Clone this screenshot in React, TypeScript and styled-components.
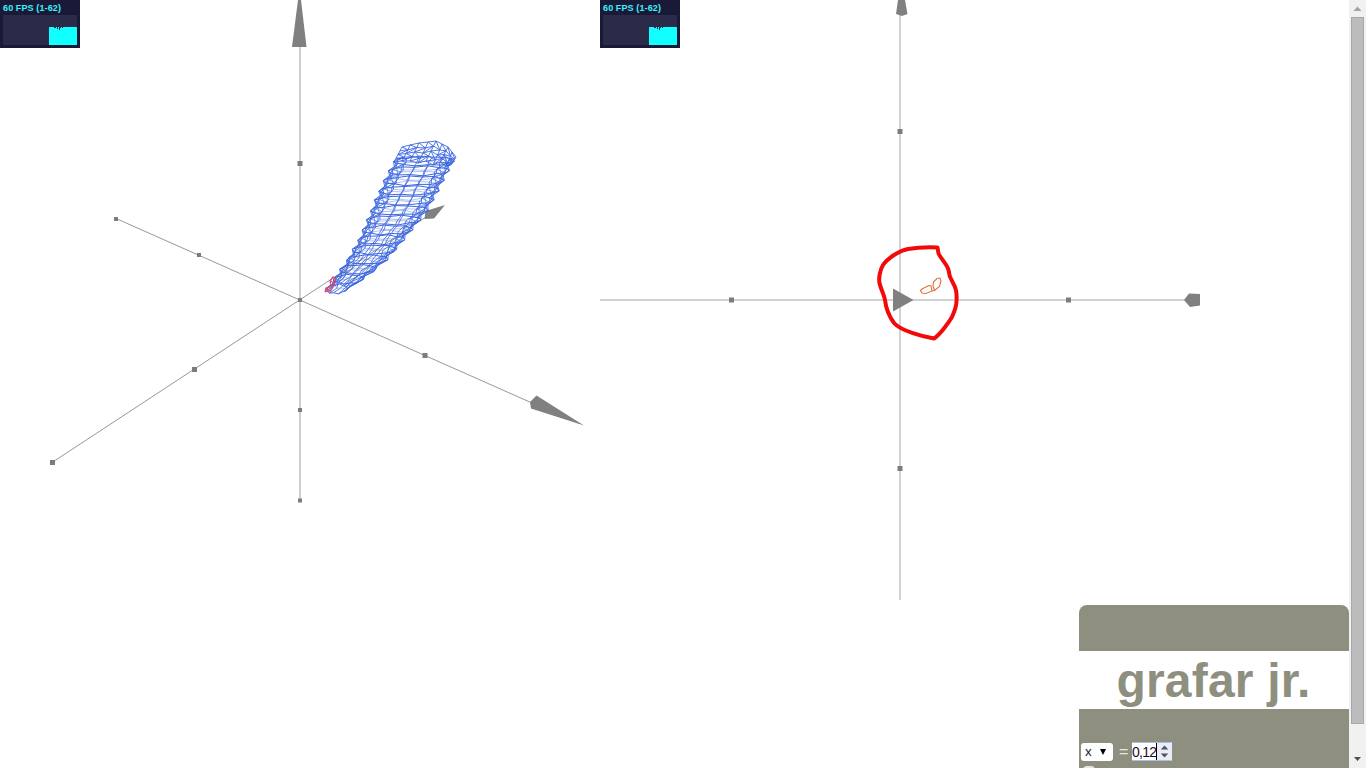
import React from 'react';
import styled, { createGlobalStyle } from 'styled-components';

const GlobalStyle = createGlobalStyle`
  * { box-sizing: border-box; }
  html, body { margin: 0; background: #fff; overflow: hidden; }
  body { font-family: "Liberation Sans", Arial, sans-serif; }
`;

const Page = styled.div`
  display: flex;
  width: 1366px;
  height: 768px;
  overflow: hidden;
`;
const Content = styled.main`
  flex: 1;
  display: flex;
  flex-direction: column;
  gap: 5px;
  min-width: 0;
`;
const Plots = styled.div`
  display: flex;
  flex: none;
  height: 600px;
`;
const PlotFrame = styled.section`
  position: relative;
  width: 600px;
  height: 600px;
`;
const Canvas = styled.svg`
  display: block;
  width: 600px;
  height: 600px;
`;
const Stats = styled.div`
  position: absolute;
  top: 0;
  left: 0;
  width: 80px;
  height: 48px;
  padding: 2px 3px 3px;
  background: #1a1a38;
`;
const StatsLabel = styled.div`
  height: 13px;
  font: bold 9px/12px "Liberation Sans", Arial, sans-serif;
  letter-spacing: 0.12px;
  color: #3df2fa;
  white-space: nowrap;
`;
const StatsGraph = styled.svg`
  display: block;
  width: 74px;
  height: 30px;
  background: #2a2a49;
`;

const Panel = styled.aside`
  flex: none;
  align-self: flex-end;
  width: 270px;
  height: 200px;
  border-radius: 8px 8px 0 0;
  background: #8f8f7f;
  padding-top: 46px;
`;
const Title = styled.h1`
  margin: 0;
  height: 58px;
  background: #fff;
  color: #8f8f7f;
  font-size: 48px;
  line-height: 60px;
  letter-spacing: 0.2px;
  text-indent: -1px;
  text-align: center;
  white-space: nowrap;
`;
const Controls = styled.div`
  display: flex;
  align-items: center;
  margin-top: 33px;
  padding-left: 2px;
  height: 19px;
  font-size: 13.33px;
`;
const Select = styled.div`
  display: flex;
  align-items: center;
  justify-content: space-between;
  width: 32px;
  height: 18px;
  padding: 0 7px 0 4px;
  border-radius: 3px;
  background: #fff;
  color: #222;
`;
const Equals = styled.span`
  width: 19px;
  padding-left: 6px;
  color: #e6e6e0;
  font-size: 16px;
  line-height: 18px;
`;
const NumberField = styled.div`
  display: flex;
  align-items: center;
  width: 40px;
  height: 19px;
  border: 1px solid #a9bde8;
  border-right-color: #e6eaf5;
  border-left: 0;
  background: #fff;
  color: #1a0d28;
`;
const Value = styled.span`
  width: 25px;
  height: 17px;
  line-height: 19px;
  font-size: 14px;
  letter-spacing: -0.75px;
  border-right: 1px solid #000;
  white-space: nowrap;
`;
const Spinner = styled.svg`
  flex: 1;
  height: 17px;
  background: #e9edfa;
`;
const NextRow = styled.div`
  width: 12px;
  height: 12px;
  margin: 5px 0 0 4px;
  border-radius: 4px;
  background: #e6e6e0;
`;

const Scrollbar = styled.div`
  flex: none;
  display: flex;
  flex-direction: column;
  align-items: center;
  width: 17px;
  background: #f1f1f1;
`;
const Track = styled.div`
  flex: 1;
`;
const ScrollButton = styled.svg`
  flex: none;
  width: 17px;
  height: 17px;
`;
const Thumb = styled.div`
  width: 13px;
  height: 707px;
  border: 1px solid #a8a8a8;
  background: #bcbcbc;
`;

type Point = [number, number];

// Silhouette of the surface, listed from its tip upwards.
const leftEdge: Point[] = [
  [325, 291], [332, 282], [339, 271], [348, 258], [358, 240], [366, 222],
  [374, 202], [383, 182], [392, 164], [402, 147],
];
const rightEdge: Point[] = [
  [331, 293], [345, 290], [358, 283], [371, 273], [385, 262], [397, 249],
  [409, 234], [420, 221], [431, 206], [440, 188], [448, 173], [456, 157],
];

const xAt = (edge: Point[], y: number): number => {
  for (let i = 0; i < edge.length - 1; i += 1) {
    const [x0, y0] = edge[i];
    const [x1, y1] = edge[i + 1];
    if (y <= y0 && y >= y1) return x0 + ((x1 - x0) * (y0 - y)) / (y0 - y1);
  }
  return y > edge[0][1] ? edge[0][0] : edge[edge.length - 1][0];
};

const RINGS = 27;
const SIDES = 14;

const ring = (k: number): Point[] => {
  const t = k / (RINGS - 1);
  const y = 289 - t * 128;
  const left = xAt(leftEdge, y);
  const right = xAt(rightEdge, y);
  const middle = (left + right) / 2;
  const inset = k % 2 ? 3.4 : -0.4;
  const radius = (right - left) / 2 - inset;
  return Array.from({ length: SIDES }, (_, j) => {
    const a = ((j + 0.15) / SIDES) * Math.PI * 2;
    const jitter = Math.sin(j * 2.7 + k * 1.3) * 0.7;
    return [
      middle + Math.cos(a) * radius,
      y + Math.sin(a) * 4.4 + jitter - Math.cos(a) * 0.5,
    ] as Point;
  });
};

const rings = Array.from({ length: RINGS }, (_, k) => ring(k));
const fmt = (p: Point) => `${p[0].toFixed(1)} ${p[1].toFixed(1)}`;
const line = (pts: Point[]) => `M${pts.map(fmt).join('L')}`;
const mainRings = rings.filter((_, k) => k % 2 === 0).map((r) => `${line(r)}Z`).join('');
const midRings = rings.filter((_, k) => k % 2 === 1).map((r) => `${line(r)}Z`).join('');
const ribs = Array.from({ length: SIDES }, (_, j) => line(rings.map((r) => r[j]))).join('');
const braces = [0, 1, 5, 6, 7, 8, 12, 13]
  .map((j) => line(rings.map((r, k) => r[(j + (k % 2)) % SIDES])))
  .join('');

// The open mouth: strips between the last ring and the rim.
const rim: Point[] = [
  [402, 147], [410, 145], [419, 143], [428, 142], [436, 141], [442, 144], [448, 147], [452, 152], [456, 157],
];
const base: Point[] = [
  [394, 162], [402, 160], [410, 161], [418, 162], [426, 161], [433, 164], [440, 162], [446, 165], [451, 165],
];
const strip = (f: number): Point[] =>
  rim.map(([x, y], i) => [
    x + (base[i][0] - x) * f,
    y + (base[i][1] - y) * f + (i % 2 && f > 0 ? 1 : 0),
  ]);
const strips = [0, 0.25, 0.5, 0.75, 1].map(strip);
const mouth =
  strips.map(line).join('') +
  rim.map((_, i) => line(strips.map((s) => s[i]))).join('') +
  rim.slice(1).map((_, i) => line(strips.map((s, k) => s[i + (k % 2)]))).join('');

const Marks = ({ points, size = 5 }: { points: Point[]; size?: number }) => (
  <g fill="#7c7c7c">
    {points.map(([x, y]) => (
      <rect key={`${x}-${y}`} x={x - size / 2} y={y - size / 2} width={size} height={size} />
    ))}
  </g>
);

const FpsMeter = () => (
  <Stats>
    <StatsLabel>60 FPS (1-62)</StatsLabel>
    <StatsGraph viewBox="0 0 74 30">
      <path d="M46 12H51V13H53V12H54V14H55V12H56V15H57V13H58V12H59V13H60V12H74V30H46Z" fill="#1ff" />
    </StatsGraph>
  </Stats>
);

const SpacePlot = () => (
  <PlotFrame>
    <Canvas viewBox="0 0 600 600">
      <path d="M300 46V500" stroke="#c4c4c4" strokeWidth="1.6" />
      <path d="M116 218.500L532 403M52 462.500L426 217" stroke="#858585" strokeWidth=".85" />
      <g fill="#808080">
        <path d="M298 0H301L306.500 47H292Z" />
        <path d="M536.500 395.500L584 425.500L531 408.500L530 402Z" />
        <path d="M445 205L425.500 211L424.500 219L434 218.500Z" />
      </g>
      <Marks points={[[300, 163.5], [425, 355.5], [194.5, 369.5], [52.5, 462.5]]} />
      <Marks size={4} points={[[116, 219], [199, 255], [300, 300], [300, 410], [300, 500.5]]} />
      <g fill="none" stroke="#3d67df" strokeLinejoin="round">
        <path d={mainRings} strokeWidth="1" />
        <path d={midRings} strokeWidth=".4" />
        <path d={ribs} strokeWidth=".85" />
        <path d={braces} strokeWidth=".65" />
        <path d={mouth} strokeWidth=".9" />
      </g>
      <path d="M325 292L326 288L331 286L330 281L333 277L336 280L334 285L330 291L325 292M326 288L330 291M331 281L335 284" fill="none" stroke="#df4665" strokeWidth="1.2" />
    </Canvas>
    <FpsMeter />
  </PlotFrame>
);

const PlanePlot = () => (
  <PlotFrame>
    <Canvas viewBox="0 0 600 600">
      <path d="M0 300H586M300 14V600" stroke="#d2d2d2" strokeWidth="2" />
      <g fill="#808080">
        <path d="M298 0H305L307.500 14L302 16L296 14Z" />
        <path d="M584 300L589 293.500L600 294V305.500L590 307Z" />
        <path d="M293 288.500L313.500 300L293 311.500Z" />
      </g>
      <Marks points={[[300, 131.5], [131.5, 300], [468.5, 300], [300, 468.5]]} />
      <path
        d="M320.500 290.500L322 289L329 285.500L331 286L332 291L326 293.500L322 293ZM332 291L334.500 290.500L339.500 286.500L341 281L340 278L337 278.500L333.500 282L333 286L334.500 290.500"
        fill="none" stroke="#df713a" strokeWidth="1.1"
      />
      <path
        d="M337.500 247.500C325 247 317 247.500 308 249C298 251 287 259 283 265C280 270 278.500 278 279.500 283C281 290 284 294 285 300C286 309 289 316 294 323C301 331 324 337 334 338.500C340 335 349 322 352 317C355 310 356.500 307 356.500 301C357 292 356 288 352.500 282C350 278 349 275 348.500 270C347 264 341 259 338.500 253.500Z"
        fill="none" stroke="#f20a0a" strokeWidth="4" strokeLinejoin="round"
      />
    </Canvas>
    <FpsMeter />
  </PlotFrame>
);

export default function App() {
  return (
    <>
      <GlobalStyle />
      <Page>
        <Content>
          <Plots>
            <SpacePlot />
            <PlanePlot />
          </Plots>
          <Panel>
            <Title>grafar jr.</Title>
            <Controls>
              <Select>
                x
                <svg width="6" height="6" viewBox="0 0 6 6">
                  <path d="M0 0H6L3 6Z" fill="#000" />
                </svg>
              </Select>
              <Equals>=</Equals>
              <NumberField>
                <Value>0,12</Value>
                <Spinner viewBox="0 0 13 17" preserveAspectRatio="none">
                  <path d="M3.500 6.500L7 2.500L10.500 6.500ZM3.500 10.500L7 14.500L10.500 10.500Z" fill="#555" />
                </Spinner>
              </NumberField>
            </Controls>
            <NextRow />
          </Panel>
        </Content>
        <Scrollbar>
          <ScrollButton viewBox="0 0 17 17">
            <path d="M4.500 11L8.500 6.500L12.500 11Z" fill="#a3a3a3" />
          </ScrollButton>
          <Thumb />
          <Track />
          <ScrollButton viewBox="0 0 17 17">
            <path d="M5 6H12L8.500 10Z" fill="#505050" />
          </ScrollButton>
        </Scrollbar>
      </Page>
    </>
  );
}
